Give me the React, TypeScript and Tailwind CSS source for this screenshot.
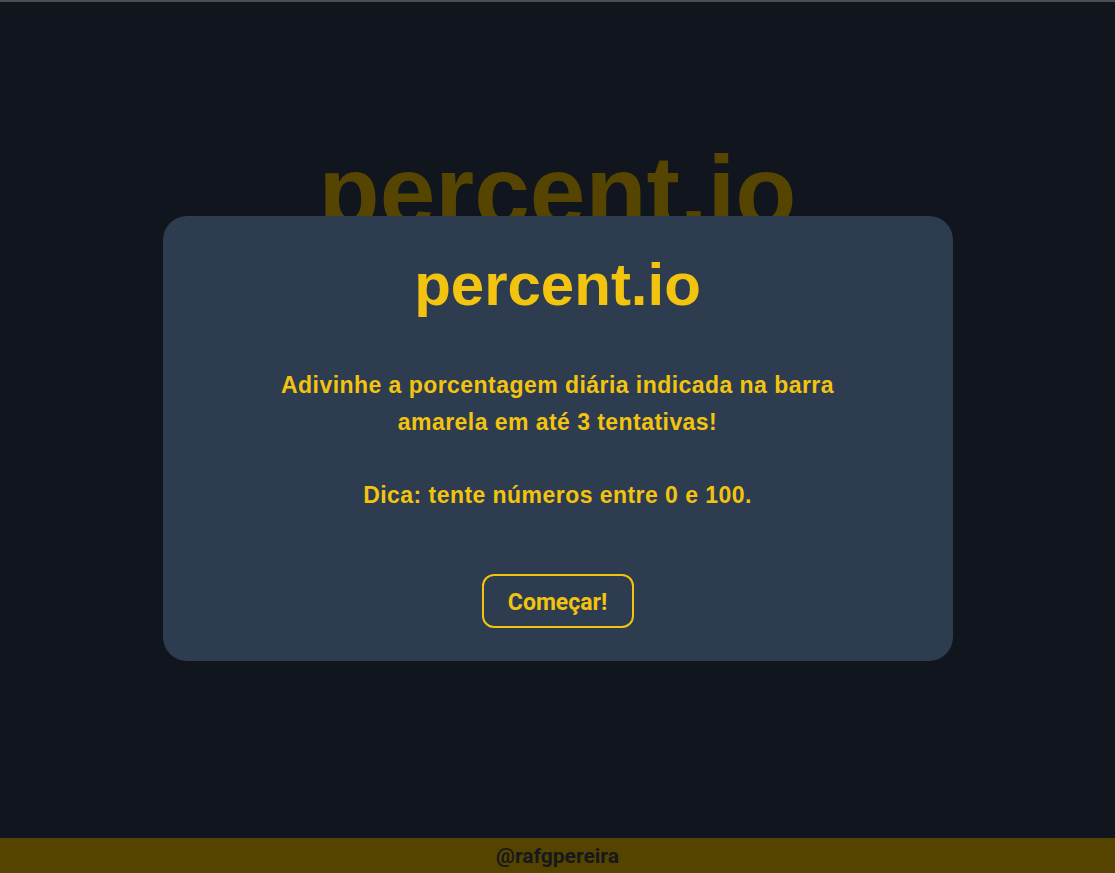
export default function App() {
  return (
    <div className="relative flex h-screen flex-col border-t-2 border-[#4d4d4f] bg-[#11151d]" style={{ fontFamily: '"Liberation Sans", Arial, sans-serif' }}>
      <main className="flex flex-1 justify-center">
        <h1 className="mt-[139px] text-[100px] font-bold leading-none text-[#554500]">percent.io</h1>
      </main>
      <footer className="flex h-[35px] items-center justify-center bg-[#554400] pt-[3px]">
        <span className="font-['Roboto',sans-serif] text-[21px] font-bold text-[#16181b]">@rafgpereira</span>
      </footer>

      <div className="fixed inset-0 flex items-center justify-center pt-[4px]">
        <div className="flex h-[445px] w-[790px] flex-col items-center rounded-[24px] bg-[#2d3c4f] pt-[39px] text-[#f3c40f]">
          <h2 className="text-[60px] font-bold leading-none">percent.io</h2>
          <p className="mt-[52px] w-[580px] text-center text-[23px] font-bold leading-[36.5px] tracking-[0.45px]">
            Adivinhe a porcentagem diária indicada na barra amarela em até 3 tentativas!
            <br />
            <br />
            Dica: tente números entre 0 e 100.
          </p>
          <button className="mt-[61px] h-[54px] w-[152px] rounded-[12px] border-2 border-[#f3c40f] pt-[5px] font-['Roboto',sans-serif] text-[23px] font-bold text-[#f3c40f]">
            Começar!
          </button>
        </div>
      </div>
    </div>
  );
}
